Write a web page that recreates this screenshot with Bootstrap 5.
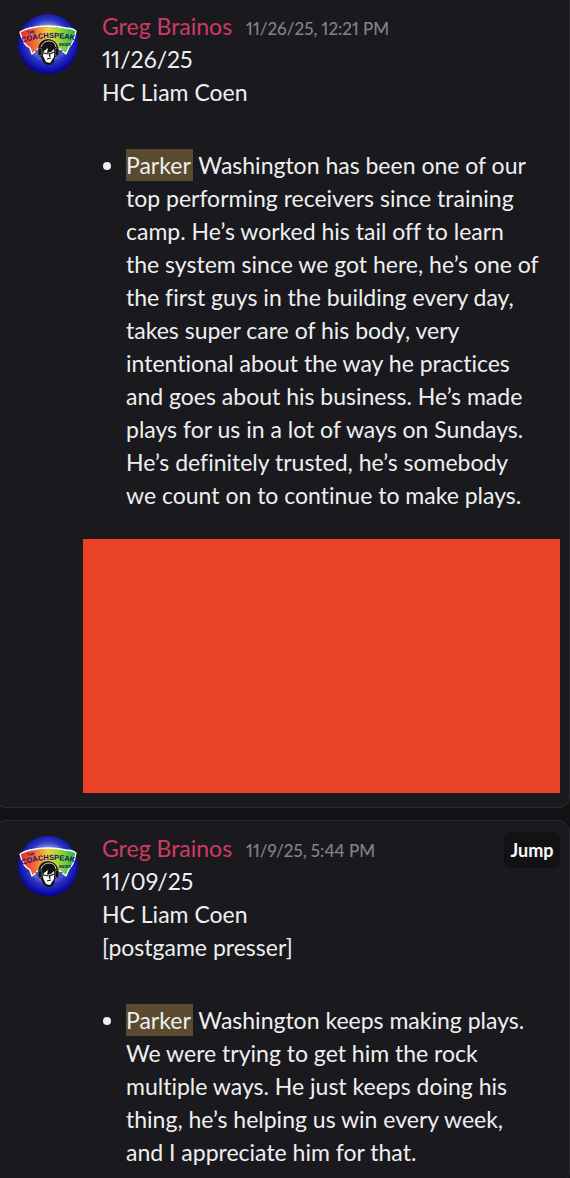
<!DOCTYPE html>
<html lang="en">
<head>
<meta charset="utf-8">
<meta name="viewport" content="width=device-width, initial-scale=1">
<title>Search results</title>
<link href="https://cdn.jsdelivr.net/npm/bootstrap@5.3.0/dist/css/bootstrap.min.css" rel="stylesheet">
<style>
  body { background: #121214; color: #efeff1; font-family: Lato, "Noto Sans", sans-serif; font-size: 23px; line-height: 33px; font-variant-ligatures: none; font-variant-numeric: proportional-nums; overflow-x: hidden; }
  .results { gap: 12px; margin-left: -6px; }
  .result { background: #1a1a1e; border: 1px solid #2a2a2f; border-radius: 12px; padding: 11px 9px 14px 23px; }
  .result:first-child { border-top: 0; border-top-left-radius: 0; border-top-right-radius: 0; padding-top: 10px; }
  .message { gap: 24px; }
  .message header { height: 33px; }
  .avatar { width: 60px; height: 60px; margin-top: 4px; }
  .author { color: #cf3a64; text-decoration: none; margin-right: 14px; }
  .stamp { color: #81828a; font-size: 17px; font-weight: 500; }
  .quote { margin-top: 39px; padding-left: 24px; }
  .quote li::marker { font-size: 24px; }
  .hit { background: #5a4a2f; color: inherit; padding: 2px 2px 2px 0; }
  .attachment { background: #ea4227; height: 254px; margin: 27px 0 0 65px; }
  .jump { background: #121214; color: #fbfbfb; font-size: 18px; font-weight: 700; line-height: 36px; border-radius: 6px; padding: 0; width: 56px; height: 36px; }
</style>
<script src="https://cdn.jsdelivr.net/npm/bootstrap@5.3.0/dist/js/bootstrap.bundle.min.js"></script>
</head>
<body>
<svg width="0" height="0" class="position-absolute" aria-hidden="true">
  <defs>
    <radialGradient id="glow" cx=".5" cy=".45" r=".53">
      <stop offset="0" stop-color="#fff"/><stop offset=".4" stop-color="#a9b4f4"/><stop offset=".68" stop-color="#2c36c2"/><stop offset="1" stop-color="#0504a0"/>
    </radialGradient>
    <linearGradient id="rainbow">
      <stop offset="0" stop-color="#e02a2c"/><stop offset=".25" stop-color="#f0663a"/><stop offset=".5" stop-color="#f2d23c"/><stop offset=".72" stop-color="#8fd834"/><stop offset="1" stop-color="#24b04c"/>
    </linearGradient>
    <symbol id="coach" viewBox="0 0 60 60">
      <circle cx="30" cy="30" r="30" fill="url(#glow)"/>
      <path d="M2 18Q7 15 12 14Q30 10 48 14Q54 14 58 17Q56 29 51 33L48 40L42 35H20L14 40L12 34Q5 31 2 18Z" fill="url(#rainbow)" stroke="#fff" stroke-width="1.3" stroke-linejoin="round"/>
      <path d="M17 36H45L41 43H20Z" fill="#1a22b4" opacity=".65"/>
      <path id="arc" d="M4 29Q30 20 59 27" fill="none"/>
      <g fill="#160c66" font-family="Liberation Sans, sans-serif" font-weight="bold">
        <text font-size="7.500"><textPath href="#arc" startOffset="0">COACHSPEAK</textPath></text>
        <text x="9" y="20" font-size="4" transform="rotate(-8 9 20)">THE</text>
        <text x="41" y="32" font-size="4">INDEX</text>
      </g>
      <path d="M20 40Q19 26 30 25Q41 26 41 40L37 43Q36 51 31 51Q26 51 23 43Z" fill="#111"/>
      <path d="M23 33Q25 27 31 27Q37 27 38 33" fill="none" stroke="#d8d8d8" stroke-width="1"/>
      <path d="M26 37L30 34L29 39L33 38L36 35L36 43L32 49L28 48L25 42Z" fill="#fff"/>
      <path d="M26 39L30 40M32 40L36 38M29 45L33 44M31 39L32 43" stroke="#111" stroke-width="1.200"/>
      <rect x="20" y="34" width="4" height="8" rx="2" fill="#111" stroke="#bbb" stroke-width=".5"/>
      <rect x="37" y="34" width="4" height="8" rx="2" fill="#111" stroke="#bbb" stroke-width=".5"/>
    </symbol>
  </defs>
</svg>
<main class="results d-flex flex-column">
  <article class="result">
    <div class="message d-flex align-items-start">
      <svg class="avatar flex-shrink-0" role="img" aria-label="The Coachspeak Index"><use href="#coach"/></svg>
      <div class="flex-grow-1">
        <header class="text-nowrap"><a class="author" href="#">Greg Brainos</a><time class="stamp">11/26/25, 12:21 PM</time></header>
        <div>11/26/25</div>
        <div>HC Liam Coen</div>
        <ul class="quote mb-0 text-nowrap">
          <li><mark class="hit">Parker</mark> Washington has been one of our<br>top performing receivers since training<br>camp. He’s worked his tail off to learn<br>the system since we got here, he’s one of<br>the first guys in the building every day,<br>takes super care of his body, very<br>intentional about the way he practices<br>and goes about his business. He’s made<br>plays for us in a lot of ways on Sundays.<br>He’s definitely trusted, he’s somebody<br>we count on to continue to make plays.</li>
        </ul>
      </div>
    </div>
    <div class="attachment"></div>
  </article>
  <article class="result">
    <div class="message d-flex align-items-start">
      <svg class="avatar flex-shrink-0" role="img" aria-label="The Coachspeak Index"><use href="#coach"/></svg>
      <div class="flex-grow-1">
        <header class="d-flex justify-content-between text-nowrap">
          <div><a class="author" href="#">Greg Brainos</a><time class="stamp">11/9/25, 5:44 PM</time></div>
          <button type="button" class="jump btn border-0">Jump</button>
        </header>
        <div>11/09/25</div>
        <div>HC Liam Coen</div>
        <div>[postgame presser]</div>
        <ul class="quote mb-0 text-nowrap">
          <li><mark class="hit">Parker</mark> Washington keeps making plays.<br>We were trying to get him the rock<br>multiple ways. He just keeps doing his<br>thing, he’s helping us win every week,<br>and I appreciate him for that.</li>
        </ul>
      </div>
    </div>
  </article>
</main>
</body>
</html>
